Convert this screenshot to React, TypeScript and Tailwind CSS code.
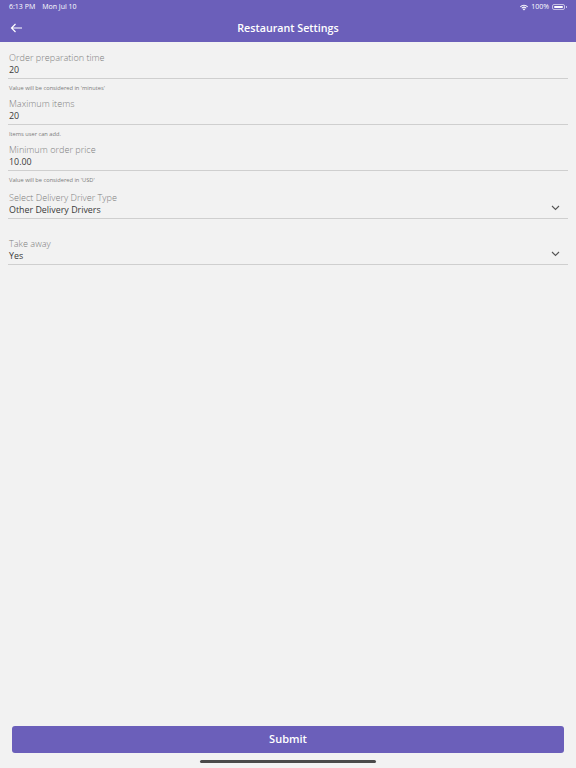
import React from 'react';

const font = { fontFamily: '"Open Sans", "Noto Sans", sans-serif' };

function TextField({ label, value, helper }: { label: string; value: string; helper: string }) {
  return (
    <div>
      <div className="border-b border-[#cfcfcf] pb-[2px] pl-[1px]">
        <div className="pt-[1px] text-[9.1px] leading-[12px] font-light text-[#7e7e7e]">{label}</div>
        <div className="text-[8.9px] leading-[12px] text-[#3a3a3a]">{value}</div>
      </div>
      <div className="mt-[5px] mb-[5px] pl-[1px] text-[5.7px] leading-[8px] text-[#7a7a7a]">{helper}</div>
    </div>
  );
}

function SelectField({ label, value }: { label: string; value: string }) {
  return (
    <div className="flex items-end border-b border-[#cfcfcf] pb-[2px] pl-[1px]">
      <div className="flex-1">
        <div className="pt-[1px] text-[9.1px] leading-[12px] font-light text-[#7e7e7e]">{label}</div>
        <div className="text-[8.9px] leading-[12px] text-[#3a3a3a]">{value}</div>
      </div>
      <svg width="9" height="6" viewBox="0 0 9 6" className="mb-[5px] mr-[8px]">
        <path d="M1 1l3.5 3.5L8 1" fill="none" stroke="#555" strokeWidth="1.1" />
      </svg>
    </div>
  );
}

export default function App() {
  return (
    <div className="relative flex h-[768px] w-[576px] flex-col bg-[#f2f2f2]" style={font}>
      <div className="bg-[#6b5fba] text-white">
        <div className="flex h-[14px] items-center justify-between px-[9px] text-[7px] font-medium">
          <span>
            6:13 PM<span className="ml-[7px]">Mon Jul 10</span>
          </span>
          <span className="flex items-center gap-[2px]">
            <svg width="10" height="7" viewBox="0 0 10 7">
              <path d="M5 6.6L3.6 5.1a2 2 0 0 1 2.8 0z" fill="#fff" />
              <path d="M2.4 3.9a3.7 3.7 0 0 1 5.2 0l-.7.7a2.7 2.7 0 0 0-3.8 0z" fill="#fff" />
              <path d="M1 2.5a5.7 5.7 0 0 1 8 0l-.7.7a4.7 4.7 0 0 0-6.6 0z" fill="#fff" />
            </svg>
            <span>100%</span>
            <span className="ml-[1px] flex items-center">
              <span className="h-[6px] w-[13px] rounded-[2px] border border-white/60 p-[1px]">
                <span className="block h-full w-full rounded-[1px] bg-white" />
              </span>
              <span className="ml-[1px] h-[2px] w-[1px] bg-white/60" />
            </span>
          </span>
        </div>
        <div className="relative flex h-[28px] items-center justify-center">
          <svg width="13" height="10" viewBox="0 0 13 10" className="absolute left-[10px] top-[9px]">
            <path d="M12 5H1.5M5.5 1L1.5 5l4 4" fill="none" stroke="#fff" strokeWidth="1.2" />
          </svg>
          <span className="text-[10.7px] font-semibold">Restaurant Settings</span>
        </div>
      </div>

      <div className="flex-1 pl-[8px] pr-[8px] pt-[9px]">
        <TextField label="Order preparation time" value="20" helper="Value will be considered in 'minutes'" />
        <TextField label="Maximum items" value="20" helper="Items user can add." />
        <TextField label="Minimum order price" value="10.00" helper="Value will be considered in 'USD'" />
        <div className="mt-[7px]">
          <SelectField label="Select Delivery Driver Type" value="Other Delivery Drivers" />
        </div>
        <div className="mt-[18px]">
          <SelectField label="Take away" value="Yes" />
        </div>
      </div>

      <div className="px-[12px] pb-[15px]">
        <button className="h-[27px] w-full rounded-[3px] bg-[#6b5fba] text-[11px] font-semibold text-white">
          Submit
        </button>
      </div>
      <div className="absolute bottom-[5px] left-[200px] h-[3px] w-[176px] rounded-full bg-[#4a4a4a]" />
    </div>
  );
}
